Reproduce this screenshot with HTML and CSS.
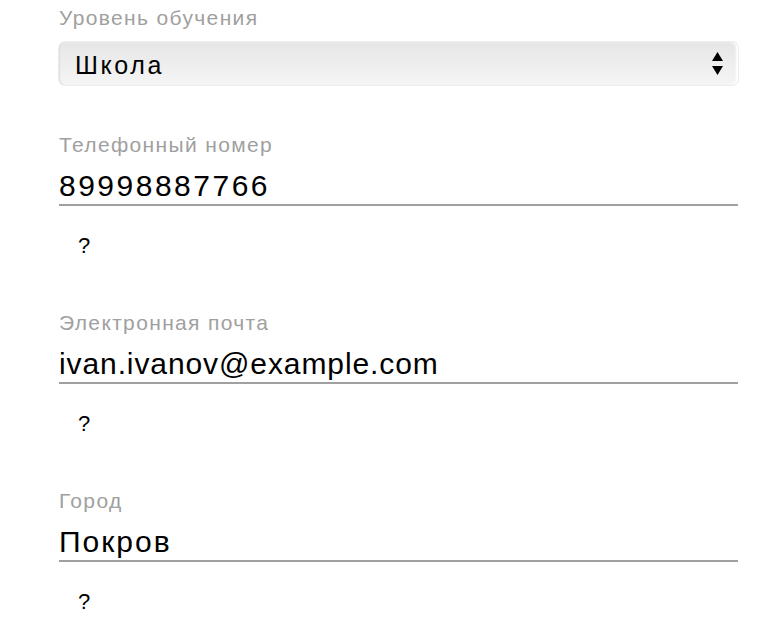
FILE: index.html
```html
<!DOCTYPE html>
<html lang="ru">
<head>
<meta charset="utf-8">
<link rel="stylesheet" href="styles.css">
</head>
<body>
<div class="form">
  <div class="field field-select">
    <div class="label">Уровень обучения</div>
    <div class="select">
      <span class="select-value">Школа</span>
      <svg class="arrows" width="11" height="23" viewBox="0 0 11 23"><path d="M5.5 0 L11 9 L0 9 Z" fill="#000"/><path d="M0 14 L11 14 L5.5 23 Z" fill="#000"/></svg>
    </div>
  </div>
  <div class="field">
    <div class="label">Телефонный номер</div>
    <div class="input input-digits">89998887766</div>
    <div class="hint">?</div>
  </div>
  <div class="field">
    <div class="label">Электронная почта</div>
    <div class="input input-latin">ivan.ivanov@example.com</div>
    <div class="hint">?</div>
  </div>
  <div class="field">
    <div class="label">Город</div>
    <div class="input input-cyr">Покров</div>
    <div class="hint">?</div>
  </div>
</div>
</body>
</html>
```
FILE: styles.css
```css
html, body {
  margin: 0;
  padding: 0;
  background: #fff;
}
body {
  font-family: "Liberation Sans", Arial, sans-serif;
  color: #000;
}
.form {
  width: 679px;
  padding: 6px 0 0 59px;
  display: flex;
  flex-direction: column;
}
.field + .field {
  margin-top: 53px;
}
.field-select + .field {
  margin-top: 48px;
}
.label {
  font-size: 21px;
  line-height: 24px;
  letter-spacing: 1.35px;
  color: #a0a0a0;
}
.select {
  margin-top: 12px;
  height: 43px;
  border-radius: 6px;
  background: linear-gradient(#e6e6e6, #f5f5f5);
  box-shadow: 0 0 0 1px #ededed, inset 1px 0 1px #dcdcdc, inset -2px 0 2px #ffffff;
  display: flex;
  align-items: center;
  justify-content: space-between;
  padding: 0 15px 0 16px;
  box-sizing: border-box;
}
.select-value {
  font-size: 25px;
  letter-spacing: 2.6px;
  line-height: 30px;
  padding-top: 2px;
}
.arrows {
  display: block;
}
.input {
  margin-top: 11px;
  font-size: 30px;
  line-height: 36px;
  border-bottom: 2px solid #a0a0a0;
}
.input-digits {
  letter-spacing: 2.5px;
}
.input-latin {
  letter-spacing: 0.9px;
}
.input-cyr {
  letter-spacing: 2px;
}
.hint {
  margin-top: 28px;
  padding-left: 19px;
  font-size: 22px;
  line-height: 24px;
}
```
